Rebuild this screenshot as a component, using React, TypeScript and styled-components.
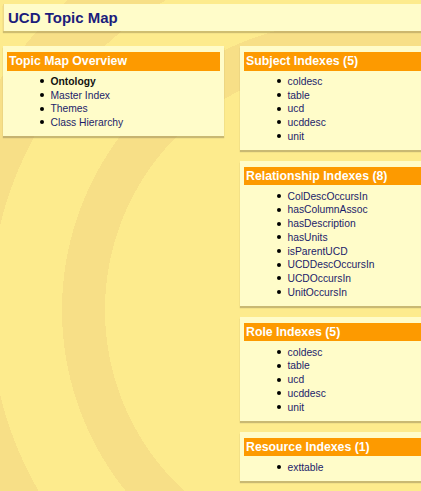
import React from "react";
import styled, { createGlobalStyle } from "styled-components";

const light = "#fdeb8d";
const dark = "#f7df87";

const GlobalStyle = createGlobalStyle`
  html, body {
    margin: 0;
    padding: 0;
    height: 100%;
    overflow: hidden;
  }
  body {
    font-family: "Liberation Sans", Arial, sans-serif;
    background: radial-gradient(
      circle at 351px 310px,
      ${light} 0 246px,
      ${dark} 246px 289px,
      ${light} 289px 361px,
      ${dark} 361px 420px,
      ${light} 420px
    );
    background-color: ${light};
  }
`;

const Page = styled.div`
  width: 480px;
  padding: 4px 0 0 3px;
  box-sizing: border-box;
`;

const TitleBar = styled.header`
  height: 27px;
  background: #fffcc9;
  border-left: 1px solid #efd98a;
  box-shadow: 0 2px 1px rgba(150, 135, 80, 0.45);
  display: flex;
  align-items: center;
  padding-left: 4px;
`;

const Title = styled.h1`
  margin: 0;
  font-size: 15px;
  font-weight: bold;
  color: #1c1c7c;
`;

const Columns = styled.div`
  display: grid;
  grid-template-columns: 221px 221px;
  column-gap: 16px;
  align-items: start;
  margin-top: 15px;
`;

const Column = styled.div`
  display: flex;
  flex-direction: column;
  gap: 11px;
`;

const Panel = styled.section`
  background: #fffcc9;
  padding: 6px 4px 7px;
  box-shadow: 0 2px 1px rgba(150, 135, 90, 0.5);
`;

const PanelHead = styled.h2`
  margin: 0;
  height: 18.5px;
  line-height: 18.5px;
  background: #fd9a00;
  color: #ffffff;
  font-size: 12.3px;
  font-weight: bold;
  padding-left: 2px;
  white-space: nowrap;
`;

const List = styled.ul`
  list-style: none;
  margin: 4px 0 0;
  padding: 0;
`;

const Item = styled.li<{ $bold?: boolean }>`
  display: flex;
  align-items: center;
  height: 13.7px;
  padding-left: 33px;
  font-size: 10.3px;
  color: ${(p) => (p.$bold ? "#111111" : "#1c1c6a")};
  font-weight: ${(p) => (p.$bold ? "bold" : "normal")};
  white-space: nowrap;

  &::before {
    content: "";
    width: 4px;
    height: 4px;
    border-radius: 50%;
    background: #000;
    margin-right: 6.5px;
    flex: none;
  }
`;

type Section = { title: string; items: string[]; bold?: string };

const overview: Section = {
  title: "Topic Map Overview",
  items: ["Ontology", "Master Index", "Themes", "Class Hierarchy"],
  bold: "Ontology",
};

const indexes: Section[] = [
  { title: "Subject Indexes (5)", items: ["coldesc", "table", "ucd", "ucddesc", "unit"] },
  {
    title: "Relationship Indexes (8)",
    items: [
      "ColDescOccursIn",
      "hasColumnAssoc",
      "hasDescription",
      "hasUnits",
      "isParentUCD",
      "UCDDescOccursIn",
      "UCDOccursIn",
      "UnitOccursIn",
    ],
  },
  { title: "Role Indexes (5)", items: ["coldesc", "table", "ucd", "ucddesc", "unit"] },
  { title: "Resource Indexes (1)", items: ["exttable"] },
];

function Box({ section }: { section: Section }) {
  return (
    <Panel>
      <PanelHead>{section.title}</PanelHead>
      <List>
        {section.items.map((it) => (
          <Item key={it} $bold={it === section.bold}>
            {it}
          </Item>
        ))}
      </List>
    </Panel>
  );
}

export default function App() {
  return (
    <Page>
      <GlobalStyle />
      <TitleBar>
        <Title>UCD Topic Map</Title>
      </TitleBar>
      <Columns>
        <Column>
          <Box section={overview} />
        </Column>
        <Column>
          {indexes.map((s) => (
            <Box key={s.title} section={s} />
          ))}
        </Column>
      </Columns>
    </Page>
  );
}
